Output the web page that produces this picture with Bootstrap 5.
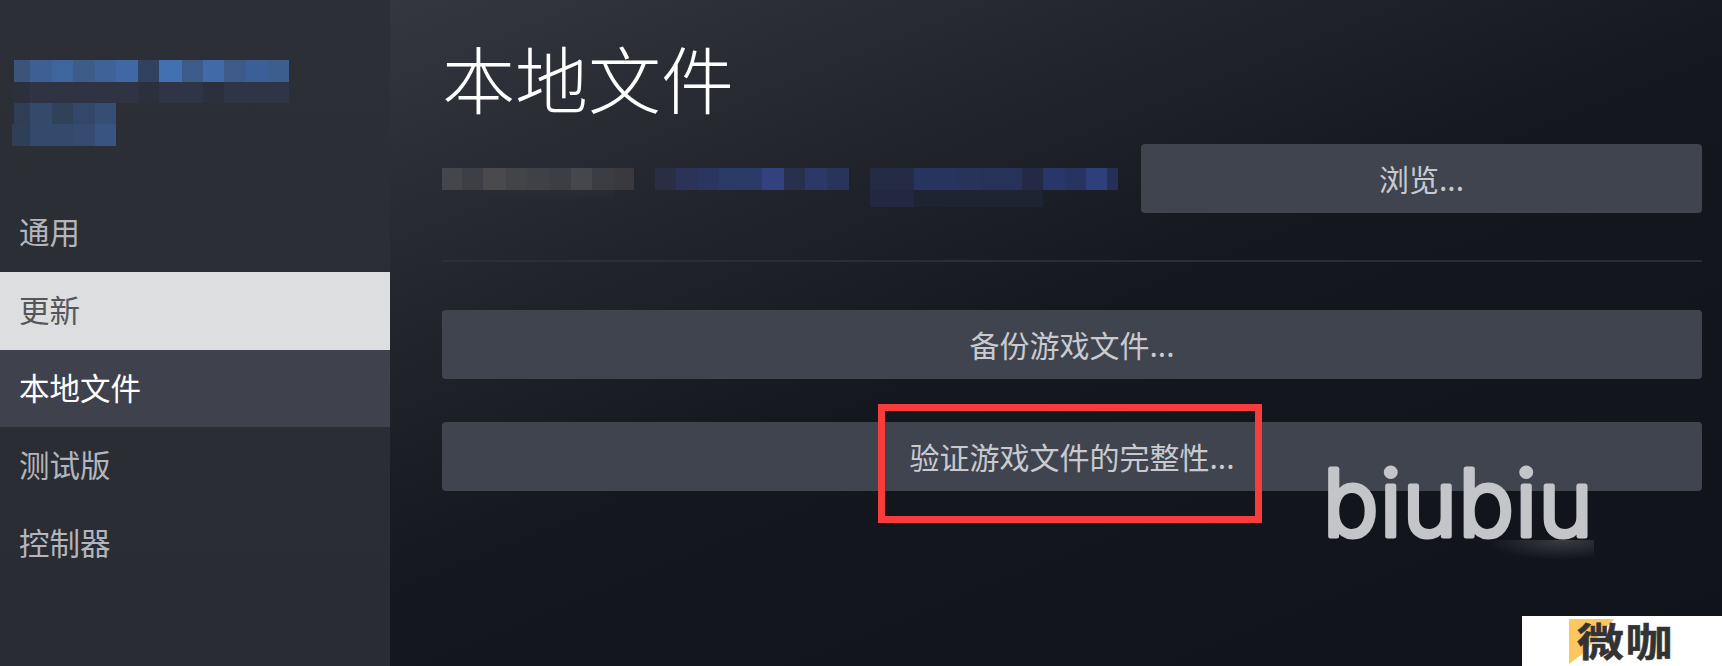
<!DOCTYPE html>
<html lang="zh-CN">

<head>
  <meta charset="UTF-8" />
  <meta name="viewport" content="width=device-width, initial-scale=1.0" />
  <title>本地文件</title>
  <link href="https://cdn.jsdelivr.net/npm/bootstrap@5.3.5/dist/css/bootstrap.min.css" rel="stylesheet">
  <style>
    body {
      margin: 0;
      height: 666px;
      overflow: hidden;
      background: #10131a;
      font-family: "Noto Sans CJK SC", "Liberation Sans", sans-serif;
    }

    /* Sidebar */
    .side-panel {
      width: 390px;
      height: 666px;
      flex-shrink: 0;
      background: linear-gradient(180deg, #2c2f36, #2a2c33);
    }

    .side-blur {
      height: 86px;
      margin-top: 60px;
      margin-bottom: 48px;
    }

    .blur-a { width: 275px; height: 22px; margin-left: 14px; background: linear-gradient(90deg, #3c5479 0 16px, #3e5f94 16px 38px, #3f659f 38px 59px, #3e5c88 59px 81px, #3f6298 81px 102px, #3f68a4 102px 124px, #30425f 124px 145px, #4370b0 145px 168px, #3d5b88 168px 189px, #406aa8 189px 210px, #3d5a88 210px 232px, #3c5f98 232px 254px, #3c5e8f 254px 275px); }
    .blur-b { width: 275px; height: 21px; margin-left: 14px; background: linear-gradient(90deg, #2c303b 0 16px, #2f3344 16px 124px, #2c303d 124px 145px, #2f3446 145px 189px, #2c303d 189px 210px, #2f3547 210px 275px); }
    .blur-c { width: 102px; height: 21px; margin-left: 14px; background: linear-gradient(90deg, #2f3d55 0 16px, #344a6b 16px 38px, #30415a 38px 59px, #33476a 59px 81px, #364e74 81px 102px); }
    .blur-d { width: 104px; height: 22px; margin-left: 12px; background: linear-gradient(90deg, #2f3f58 0 18px, #344a6d 18px 61px, #354c70 61px 83px, #395480 83px 104px); }

    .side-link {
      display: flex;
      align-items: center;
      height: 77.8px;
      padding: 0 0 2px 19px;
      font-size: 30.5px;
      color: #b4b6bc;
    }

    .side-link.is-light {
      background: #dcdee0;
      color: #54565c;
    }

    .side-link.is-current {
      background: #3f424d;
      color: #fff;
    }

    /* Main */
    .main-panel {
      height: 666px;
      padding: 0 20px 0 52px;
      background: linear-gradient(158deg, #34373f 0, #22252c 27%, #14171e 50%, #10131a 100%);
    }

    .page-title {
      height: 144px;
      margin: 0;
      padding-top: 20px;
      font-size: 73px;
      font-weight: 300;
      line-height: 112px;
      color: #fff;
    }

    .path-blur {
      margin-top: 24px;
      gap: 21px;
    }

    .path-cell { height: 22px; }
    .path-under { height: 10px; }

    .path-one { width: 192px; background: linear-gradient(90deg, #45464b 0 20px, #3e3f44 20px 41px, #4a4a4d 41px 64px, #434448 64px 85px, #3f4146 85px 108px, #3c3e43 108px 129px, #45474c 129px 150px, #3b3c41 150px 173px, #3a3a3e 173px 192px); }
    .path-two { width: 194px; background: linear-gradient(90deg, #2a2e42 0 21px, #2b3358 21px 43px, #2a3660 43px 64px, #2c3a68 64px 107px, #33427f 107px 129px, #27304c 129px 150px, #2c3868 150px 172px, #28345a 172px 194px); }
    .path-three { width: 248px; background: linear-gradient(90deg, #232c42 0 22px, #252b45 22px 44px, #27345f 44px 88px, #28335c 88px 110px, #27325a 110px 152px, #242a45 152px 173px, #29366a 173px 195px, #273360 195px 216px, #2f3f7a 216px 237px, #253058 237px 248px); }
    .under-one { width: 131px; margin-left: 41px; background: linear-gradient(180deg, #2a2c32, transparent); }
    .under-three { width: 173px; height: 17px; background: linear-gradient(90deg, #232840 0 44px, #1f2433 44px 173px); }

    .game-btn {
      display: block;
      width: 100%;
      height: 69px;
      padding: 0;
      border: 0;
      border-radius: 4px;
      background: #40444e;
      color: #c8cad0;
      font-size: 30px;
      line-height: 69px;
    }

    .game-btn:hover {
      background: #40444e;
      color: #c8cad0;
    }

    .browse-btn {
      width: 561px;
      margin-left: 22px;
      flex-shrink: 0;
    }

    .panel-rule {
      height: 2px;
      margin: 47px 0 48px;
      background: #2b2e36;
      opacity: 1;
      border: 0;
    }

    .verify-wrap { margin-top: 43px; }

    /* Overlays */
    .red-frame {
      position: absolute;
      left: 436px;
      top: -18px;
      width: 384px;
      height: 119px;
      border: 7px solid #f83c3c;
      pointer-events: none;
    }

    .biu-mark {
      position: absolute;
      left: 881px;
      top: 36px;
      overflow: visible;
    }

    .biu-mark text {
      font-family: Inter, "Liberation Sans", sans-serif;
      font-size: 92px;
      font-weight: 300;
      letter-spacing: 1.5px;
      fill: #c4c5c8;
      stroke: #c4c5c8;
      stroke-width: 5px;
      stroke-linejoin: round;
    }

    .biu-smear {
      position: absolute;
      left: 1044px;
      top: 118px;
      width: 108px;
      height: 20px;
      background: radial-gradient(ellipse at 70% 0, #3a3c41, transparent 70%);
    }

    .stamp-box {
      position: absolute;
      right: 0;
      bottom: 0;
      width: 200px;
      height: 50px;
      background: #fff;
    }

    .stamp-box svg {
      position: absolute;
      left: 47px;
      top: 2px;
    }

    .stamp-text {
      position: absolute;
      left: 55px;
      top: -1px;
      font-size: 47px;
      font-weight: 700;
      letter-spacing: 1.5px;
      line-height: 50px;
      color: #333;
      white-space: nowrap;
      transform: scaleY(.82);
      -webkit-text-stroke: .6px #333;
    }
  </style>
</head>

<body class="position-relative">

  <div class="d-flex">
    <!-- Sidebar -->
    <aside class="side-panel">
      <div class="side-blur">
        <div class="blur-a"></div>
        <div class="blur-b"></div>
        <div class="blur-c"></div>
        <div class="blur-d"></div>
      </div>
      <nav class="nav flex-column">
        <a class="side-link text-decoration-none" href="#">通用</a>
        <a class="side-link is-light text-decoration-none" href="#">更新</a>
        <a class="side-link is-current text-decoration-none" href="#">本地文件</a>
        <a class="side-link text-decoration-none" href="#">测试版</a>
        <a class="side-link text-decoration-none" href="#">控制器</a>
      </nav>
    </aside>

    <!-- Main Content -->
    <main class="main-panel flex-grow-1">
      <h1 class="page-title">本地文件</h1>

      <div class="d-flex">
        <div class="path-blur d-flex flex-grow-1">
          <div>
            <div class="path-cell path-one"></div>
            <div class="path-under under-one"></div>
          </div>
          <div class="path-cell path-two"></div>
          <div>
            <div class="path-cell path-three"></div>
            <div class="path-under under-three"></div>
          </div>
        </div>
        <button type="button" class="btn game-btn browse-btn">浏览...</button>
      </div>

      <hr class="panel-rule">

      <button type="button" class="btn game-btn">备份游戏文件...</button>

      <div class="verify-wrap position-relative">
        <button type="button" class="btn game-btn">验证游戏文件的完整性...</button>
        <div class="red-frame"></div>
        <svg class="biu-mark" width="270" height="80"><text x="0" y="78">biubiu</text></svg>
        <div class="biu-smear"></div>
      </div>
    </main>
  </div>

  <div class="stamp-box">
    <svg width="46" height="46" viewBox="0 0 46 46">
      <polygon points="0,1 45,1 12,37 0,46" fill="#fdc75d" />
    </svg>
    <span class="stamp-text">微咖</span>
  </div>

  <script src="https://cdn.jsdelivr.net/npm/bootstrap@5.3.5/dist/js/bootstrap.bundle.min.js"></script>
</body>

</html>
